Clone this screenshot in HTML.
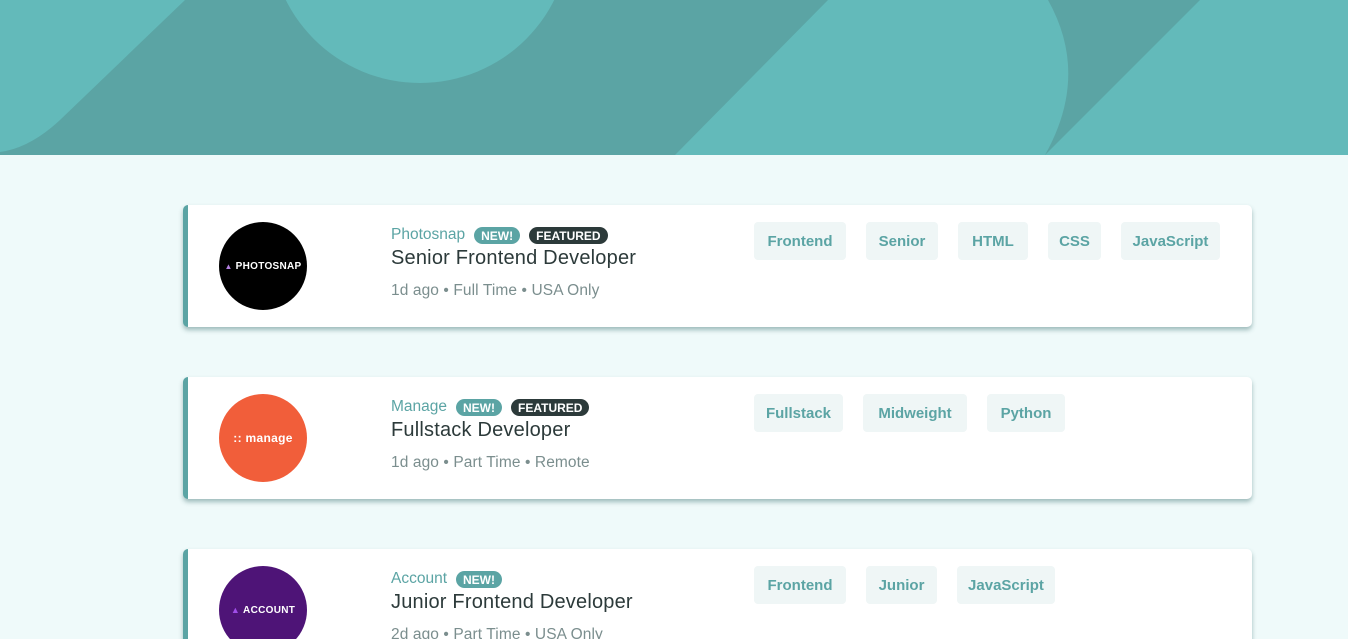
<!DOCTYPE html>
<html><head><meta charset="utf-8"><style>
*{margin:0;padding:0;box-sizing:border-box}
html,body{width:1348px;height:639px;overflow:hidden}
body{background:#effafa;font-family:"Liberation Sans",sans-serif;position:relative}
.hdr{position:absolute;left:0;top:0;width:1348px;height:155px}
.card{position:absolute;left:183px;width:1069px;height:122px;background:#fff;border-left:5px solid #5ba4a4;border-radius:5px;box-shadow:0 3px 5px rgba(60,110,110,.45)}
.logo{position:absolute;left:31px;top:17px;width:88px;height:88px;border-radius:50%;display:flex;align-items:center;justify-content:center;color:#fff;font-weight:bold;font-size:10px;letter-spacing:.3px}
.co{position:absolute;left:203px;top:21px;font-size:15.5px;color:#5ba4a4;display:flex;align-items:center}
.b{display:inline-block;border-radius:10px;font-size:12px;font-weight:bold;color:#fff;padding:3px 7px 2px;margin-left:9px;line-height:12px}
.n{background:#5ba4a4}.f{background:#2c3a3a}
.t{position:absolute;left:203px;top:42px;font-size:20px;color:#2c3a3a;letter-spacing:.2px}
.m{position:absolute;left:203px;top:77px;font-size:15.5px;color:#7b8e8e;letter-spacing:.1px}
.tags{position:absolute;top:17px;left:566px;display:flex;gap:20px}
.tag{height:38px;background:#eff6f6;border-radius:4px;color:#5ba4a4;font-weight:bold;font-size:15px;display:flex;align-items:center;justify-content:center}
</style></head><body>
<svg class="hdr" viewBox="0 0 1348 155">
<rect width="1348" height="155" fill="#5ba4a4"/>
<path d="M0 0H185L60 120Q30 148 0 152Z" fill="#63baba"/>
<circle cx="420" cy="-67" r="150" fill="#63baba"/>
<path d="M828 0H1048Q1090 75 1045 155H675Z" fill="#63baba"/>
<path d="M1200 0H1348V155H1045Z" fill="#63baba"/>
</svg>

<div class="card" style="top:205px">
<div class="logo" style="background:#000"><span style="color:#b37fe0;font-size:8px;margin-right:3px">▲</span>PHOTOSNAP</div>
<div class="co">Photosnap<span class="b n">NEW!</span><span class="b f">FEATURED</span></div>
<div class="t">Senior Frontend Developer</div>
<div class="m">1d ago • Full Time • USA Only</div>
<div class="tags"><div class="tag" style="width:92px">Frontend</div><div class="tag" style="width:72px">Senior</div><div class="tag" style="width:70px">HTML</div><div class="tag" style="width:53px">CSS</div><div class="tag" style="width:99px">JavaScript</div></div>
</div>

<div class="card" style="top:377px">
<div class="logo" style="background:#f15e3a;font-size:12px;font-weight:bold">:: manage</div>
<div class="co">Manage<span class="b n">NEW!</span><span class="b f">FEATURED</span></div>
<div class="t">Fullstack Developer</div>
<div class="m">1d ago • Part Time • Remote</div>
<div class="tags"><div class="tag" style="width:89px">Fullstack</div><div class="tag" style="width:104px">Midweight</div><div class="tag" style="width:78px">Python</div></div>
</div>

<div class="card" style="top:549px">
<div class="logo" style="background:#4e1477"><span style="color:#a04ee8;font-size:9px;margin-right:3px">▲</span>ACCOUNT</div>
<div class="co">Account<span class="b n">NEW!</span></div>
<div class="t">Junior Frontend Developer</div>
<div class="m">2d ago • Part Time • USA Only</div>
<div class="tags"><div class="tag" style="width:92px">Frontend</div><div class="tag" style="width:71px">Junior</div><div class="tag" style="width:98px">JavaScript</div></div>
</div>
</body></html>
